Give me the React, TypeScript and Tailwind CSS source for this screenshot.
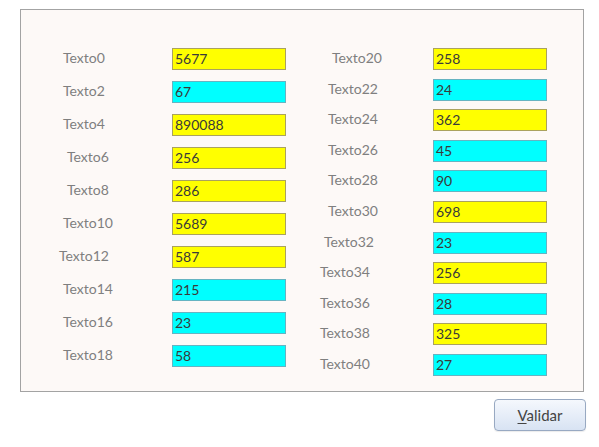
type Fill = 'y' | 'c'

interface Field {
  label: string
  value: string
  fill: Fill
  indent: string
}

// indent classes are per-row since the labels in the form don't line up
const LEFT: Field[] = [
  { label: 'Texto0', value: '5677', fill: 'y', indent: 'pl-[42px]' },
  { label: 'Texto2', value: '67', fill: 'c', indent: 'pl-[42px]' },
  { label: 'Texto4', value: '890088', fill: 'y', indent: 'pl-[42px]' },
  { label: 'Texto6', value: '256', fill: 'y', indent: 'pl-[46px]' },
  { label: 'Texto8', value: '286', fill: 'y', indent: 'pl-[46px]' },
  { label: 'Texto10', value: '5689', fill: 'y', indent: 'pl-[42px]' },
  { label: 'Texto12', value: '587', fill: 'y', indent: 'pl-[38px]' },
  { label: 'Texto14', value: '215', fill: 'c', indent: 'pl-[42px]' },
  { label: 'Texto16', value: '23', fill: 'c', indent: 'pl-[42px]' },
  { label: 'Texto18', value: '58', fill: 'c', indent: 'pl-[42px]' }
]

const RIGHT: Field[] = [
  { label: 'Texto20', value: '258', fill: 'y', indent: 'pl-[26px]' },
  { label: 'Texto22', value: '24', fill: 'c', indent: 'pl-[22px]' },
  { label: 'Texto24', value: '362', fill: 'y', indent: 'pl-[22px]' },
  { label: 'Texto26', value: '45', fill: 'c', indent: 'pl-[22px]' },
  { label: 'Texto28', value: '90', fill: 'c', indent: 'pl-[22px]' },
  { label: 'Texto30', value: '698', fill: 'y', indent: 'pl-[22px]' },
  { label: 'Texto32', value: '23', fill: 'c', indent: 'pl-[18px]' },
  { label: 'Texto34', value: '256', fill: 'y', indent: 'pl-[14px]' },
  { label: 'Texto36', value: '28', fill: 'c', indent: 'pl-[14px]' },
  { label: 'Texto38', value: '325', fill: 'y', indent: 'pl-[14px]' },
  { label: 'Texto40', value: '27', fill: 'c', indent: 'pl-[14px]' }
]

function Row({ f, labelWidth }: { f: Field; labelWidth: string }) {
  return (
    <div className="flex h-[22px] items-center">
      <div className={[labelWidth, f.indent, 'text-[14px] leading-none text-[#7f7f7f] pb-[2px]'].join(' ')}>
        {f.label}
      </div>
      <div
        className={[
          'flex h-[22px] w-[114px] items-center border pl-[2px] text-[14px] leading-none text-[#3a3a3a]',
          f.fill === 'y' ? 'bg-[#ffff00] border-[#aaa25e]' : 'bg-[#00ffff] border-[#66b4c2]'
        ].join(' ')}
      >
        {f.value}
      </div>
    </div>
  )
}

export default function App() {
  return (
    <div className="min-h-screen bg-white pt-[9px] font-['Lato','Liberation_Sans',sans-serif]">
      <div className="ml-[20px] flex h-[383px] w-[564px] border border-[#a3a3a3] bg-[#fdf9f7] pt-[38px]">
        <div className="flex w-[265px] flex-col gap-[11px]">
          {LEFT.map((f) => (
            <Row key={f.label} f={f} labelWidth="w-[151px]" />
          ))}
        </div>
        <div className="ml-[20px] flex flex-col gap-[8.6px]">
          {RIGHT.map((f) => (
            <Row key={f.label} f={f} labelWidth="w-[127px]" />
          ))}
        </div>
      </div>
      <div className="mt-[7px] flex w-[586px] justify-end">
        <button className="h-[32px] w-[92px] rounded-[4px] border border-[#98a9c2] bg-gradient-to-b from-[#f5f8fd] to-[#d8e3f3] text-[15px] text-[#444444] shadow-[0_1px_1px_rgba(0,0,0,0.08)]">
          <span className="underline underline-offset-2">V</span>alidar
        </button>
      </div>
    </div>
  )
}
